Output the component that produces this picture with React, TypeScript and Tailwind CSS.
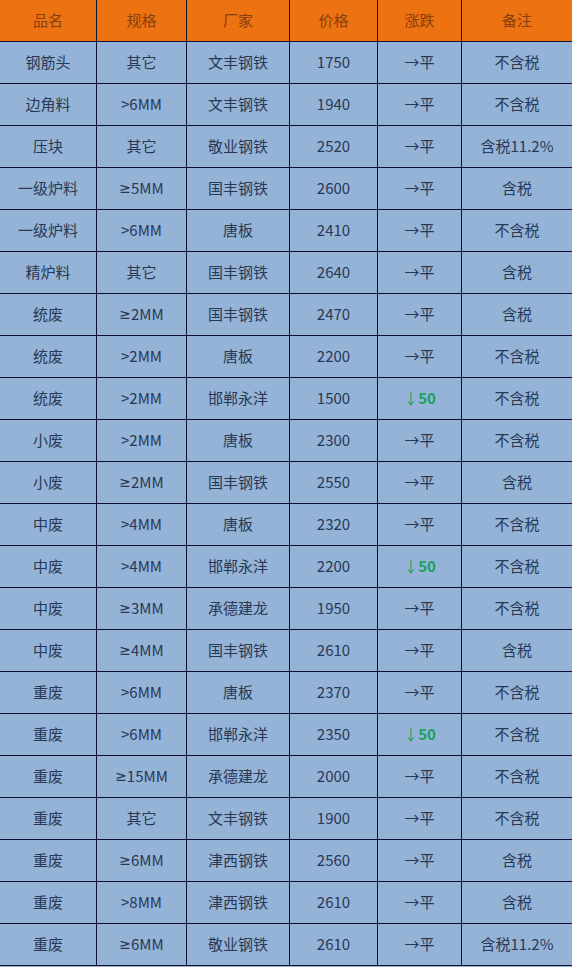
const headers = ["品名", "规格", "厂家", "价格", "涨跌", "备注"];

type Row = [string, string, string, string, string, string];

const rows: Row[] = [
  ["钢筋头", "其它", "文丰钢铁", "1750", "→平", "不含税"],
  ["边角料", ">6MM", "文丰钢铁", "1940", "→平", "不含税"],
  ["压块", "其它", "敬业钢铁", "2520", "→平", "含税11.2%"],
  ["一级炉料", "≥5MM", "国丰钢铁", "2600", "→平", "含税"],
  ["一级炉料", ">6MM", "唐板", "2410", "→平", "不含税"],
  ["精炉料", "其它", "国丰钢铁", "2640", "→平", "含税"],
  ["统废", "≥2MM", "国丰钢铁", "2470", "→平", "含税"],
  ["统废", ">2MM", "唐板", "2200", "→平", "不含税"],
  ["统废", ">2MM", "邯郸永洋", "1500", "↓50", "不含税"],
  ["小废", ">2MM", "唐板", "2300", "→平", "不含税"],
  ["小废", "≥2MM", "国丰钢铁", "2550", "→平", "含税"],
  ["中废", ">4MM", "唐板", "2320", "→平", "不含税"],
  ["中废", ">4MM", "邯郸永洋", "2200", "↓50", "不含税"],
  ["中废", "≥3MM", "承德建龙", "1950", "→平", "不含税"],
  ["中废", "≥4MM", "国丰钢铁", "2610", "→平", "含税"],
  ["重废", ">6MM", "唐板", "2370", "→平", "不含税"],
  ["重废", ">6MM", "邯郸永洋", "2350", "↓50", "不含税"],
  ["重废", "≥15MM", "承德建龙", "2000", "→平", "不含税"],
  ["重废", "其它", "文丰钢铁", "1900", "→平", "不含税"],
  ["重废", "≥6MM", "津西钢铁", "2560", "→平", "含税"],
  ["重废", ">8MM", "津西钢铁", "2610", "→平", "含税"],
  ["重废", "≥6MM", "敬业钢铁", "2610", "→平", "含税11.2%"],
];

const cols = "grid grid-cols-[97px_90px_103px_88px_84px_110px]";
const cell = "flex items-center justify-center border-r border-[#0d1030] last:border-r-0 text-[15px]";

// the CJK font draws ≥ slanted, the screenshot has the plain one
function Spec({ v }: { v: string }) {
  if (!v.startsWith("≥")) return <>{v}</>;
  return (
    <>
      <span style={{ fontFamily: '"DejaVu Sans", sans-serif' }} className="text-[14px]">≥</span>
      {v.slice(1)}
    </>
  );
}

export default function App() {
  return (
    <div
      className="w-[572px] h-[967px] bg-[#95b3d7] overflow-hidden"
      style={{ fontFamily: '"Noto Sans CJK SC", "Noto Sans", sans-serif' }}
    >
      <div className={`${cols} h-[42px] bg-[#ec7212] border-b border-[#0d1030]`}>
        {headers.map((h) => (
          <div key={h} className={`${cell} text-[#86400f]`}>
            {h}
          </div>
        ))}
      </div>
      {rows.map((r, i) => (
        <div key={i} className={`${cols} h-[42px] border-b border-[#0d1030]`}>
          {r.map((v, j) =>
            j === 4 && v.startsWith("↓") ? (
              <div key={j} className={`${cell} text-[#17a35a] font-bold`}>
                <span className="font-normal">↓</span>
                {v.slice(1)}
              </div>
            ) : (
              <div key={j} className={`${cell} text-[#283855]`}>
                {j === 1 ? <Spec v={v} /> : v}
              </div>
            )
          )}
        </div>
      ))}
    </div>
  );
}
